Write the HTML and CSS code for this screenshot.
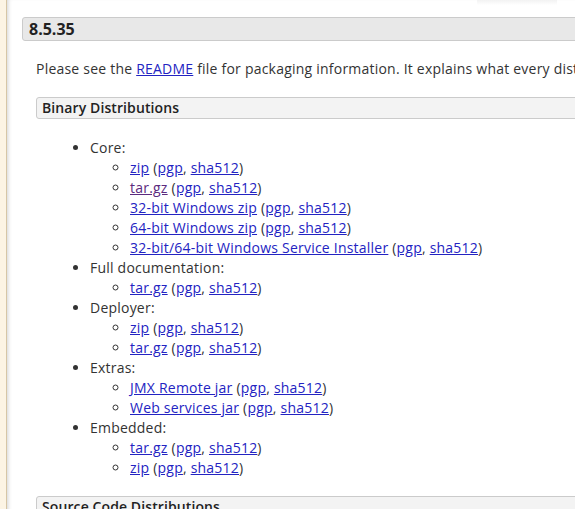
FILE: index.html
```html
<!DOCTYPE html>
<html>
<head>
<meta charset="utf-8">
<link rel="stylesheet" href="styles.css">
</head>
<body>
<div class="page">
  <div class="top-shade"></div>
  <div class="section">
    <h3 class="version">8.5.35</h3>
    <div class="version-body">
      <p class="intro">Please see the <a href="#">README</a> file for packaging information. It explains what every distribution contains.</p>
      <div class="sub">
        <h4 class="sub-title">Binary Distributions</h4>
        <ul class="dists">
          <li>Core:
            <ul>
              <li><a href="#">zip</a> (<a href="#">pgp</a>, <a href="#">sha512</a>)</li>
              <li><a href="#" class="visited">tar.gz</a> (<a href="#">pgp</a>, <a href="#">sha512</a>)</li>
              <li><a href="#">32-bit Windows zip</a> (<a href="#">pgp</a>, <a href="#">sha512</a>)</li>
              <li><a href="#">64-bit Windows zip</a> (<a href="#">pgp</a>, <a href="#">sha512</a>)</li>
              <li><a href="#">32-bit/64-bit Windows Service Installer</a> (<a href="#">pgp</a>, <a href="#">sha512</a>)</li>
            </ul>
          </li>
          <li>Full documentation:
            <ul>
              <li><a href="#">tar.gz</a> (<a href="#">pgp</a>, <a href="#">sha512</a>)</li>
            </ul>
          </li>
          <li>Deployer:
            <ul>
              <li><a href="#">zip</a> (<a href="#">pgp</a>, <a href="#">sha512</a>)</li>
              <li><a href="#">tar.gz</a> (<a href="#">pgp</a>, <a href="#">sha512</a>)</li>
            </ul>
          </li>
          <li>Extras:
            <ul>
              <li><a href="#">JMX Remote jar</a> (<a href="#">pgp</a>, <a href="#">sha512</a>)</li>
              <li><a href="#">Web services jar</a> (<a href="#">pgp</a>, <a href="#">sha512</a>)</li>
            </ul>
          </li>
          <li>Embedded:
            <ul>
              <li><a href="#">tar.gz</a> (<a href="#">pgp</a>, <a href="#">sha512</a>)</li>
              <li><a href="#">zip</a> (<a href="#">pgp</a>, <a href="#">sha512</a>)</li>
            </ul>
          </li>
        </ul>
      </div>
      <div class="sub">
        <h4 class="sub-title">Source Code Distributions</h4>
      </div>
    </div>
  </div>
</div>
</body>
</html>
```

FILE: styles.css
```css
html, body {
  margin: 0;
  padding: 0;
  overflow: hidden;
}
body {
  background: #fcf4e4;
  font-family: "Open Sans", "Noto Sans", "DejaVu Sans", sans-serif;
  color: #333;
  font-size: 14px;
  line-height: 20px;
  letter-spacing: 0.22px;
}
.page {
  margin-left: 6px;
  border-left: 1px solid #d6c6a6;
  background: #fff;
  box-shadow: inset 4px 0 4px -3px rgba(0, 0, 0, 0.18);
  min-height: 509px;
  width: 900px;
  padding-top: 17px;
  position: relative;
}
.top-shade {
  position: absolute;
  top: 0;
  left: 470px;
  width: 80px;
  height: 5px;
  background: linear-gradient(#f2f2f2, #fff);
}
.section {
  margin-left: 15px;
}
.version {
  margin: 0;
  background: #e8e8e8;
  border: 1px solid #cbcbcb;
  border-radius: 3px;
  font-size: 16px;
  font-weight: 700;
  line-height: 22px;
  padding: 0 0 0 6px;
  color: #222;
  letter-spacing: 0;
}
.version-body {
  padding-left: 14px;
}
.intro {
  margin: 18px 0 18px 0;
}
a {
  color: #2323c2;
  text-decoration: underline;
}
a.visited {
  color: #5b2a7e;
}
.sub-title {
  margin: 0;
  background: #f3f3f3;
  border: 1px solid #cbcbcb;
  border-radius: 3px;
  font-size: 14px;
  font-weight: 600;
  line-height: 20px;
  padding: 0 0 0 5px;
  color: #222;
  letter-spacing: 0.1px;
}
.dists {
  margin: 19px 0 18px 0;
  padding-left: 54px;
  list-style: disc;
}
.dists ul {
  margin: 0;
  padding-left: 40px;
  list-style: circle;
}
```
